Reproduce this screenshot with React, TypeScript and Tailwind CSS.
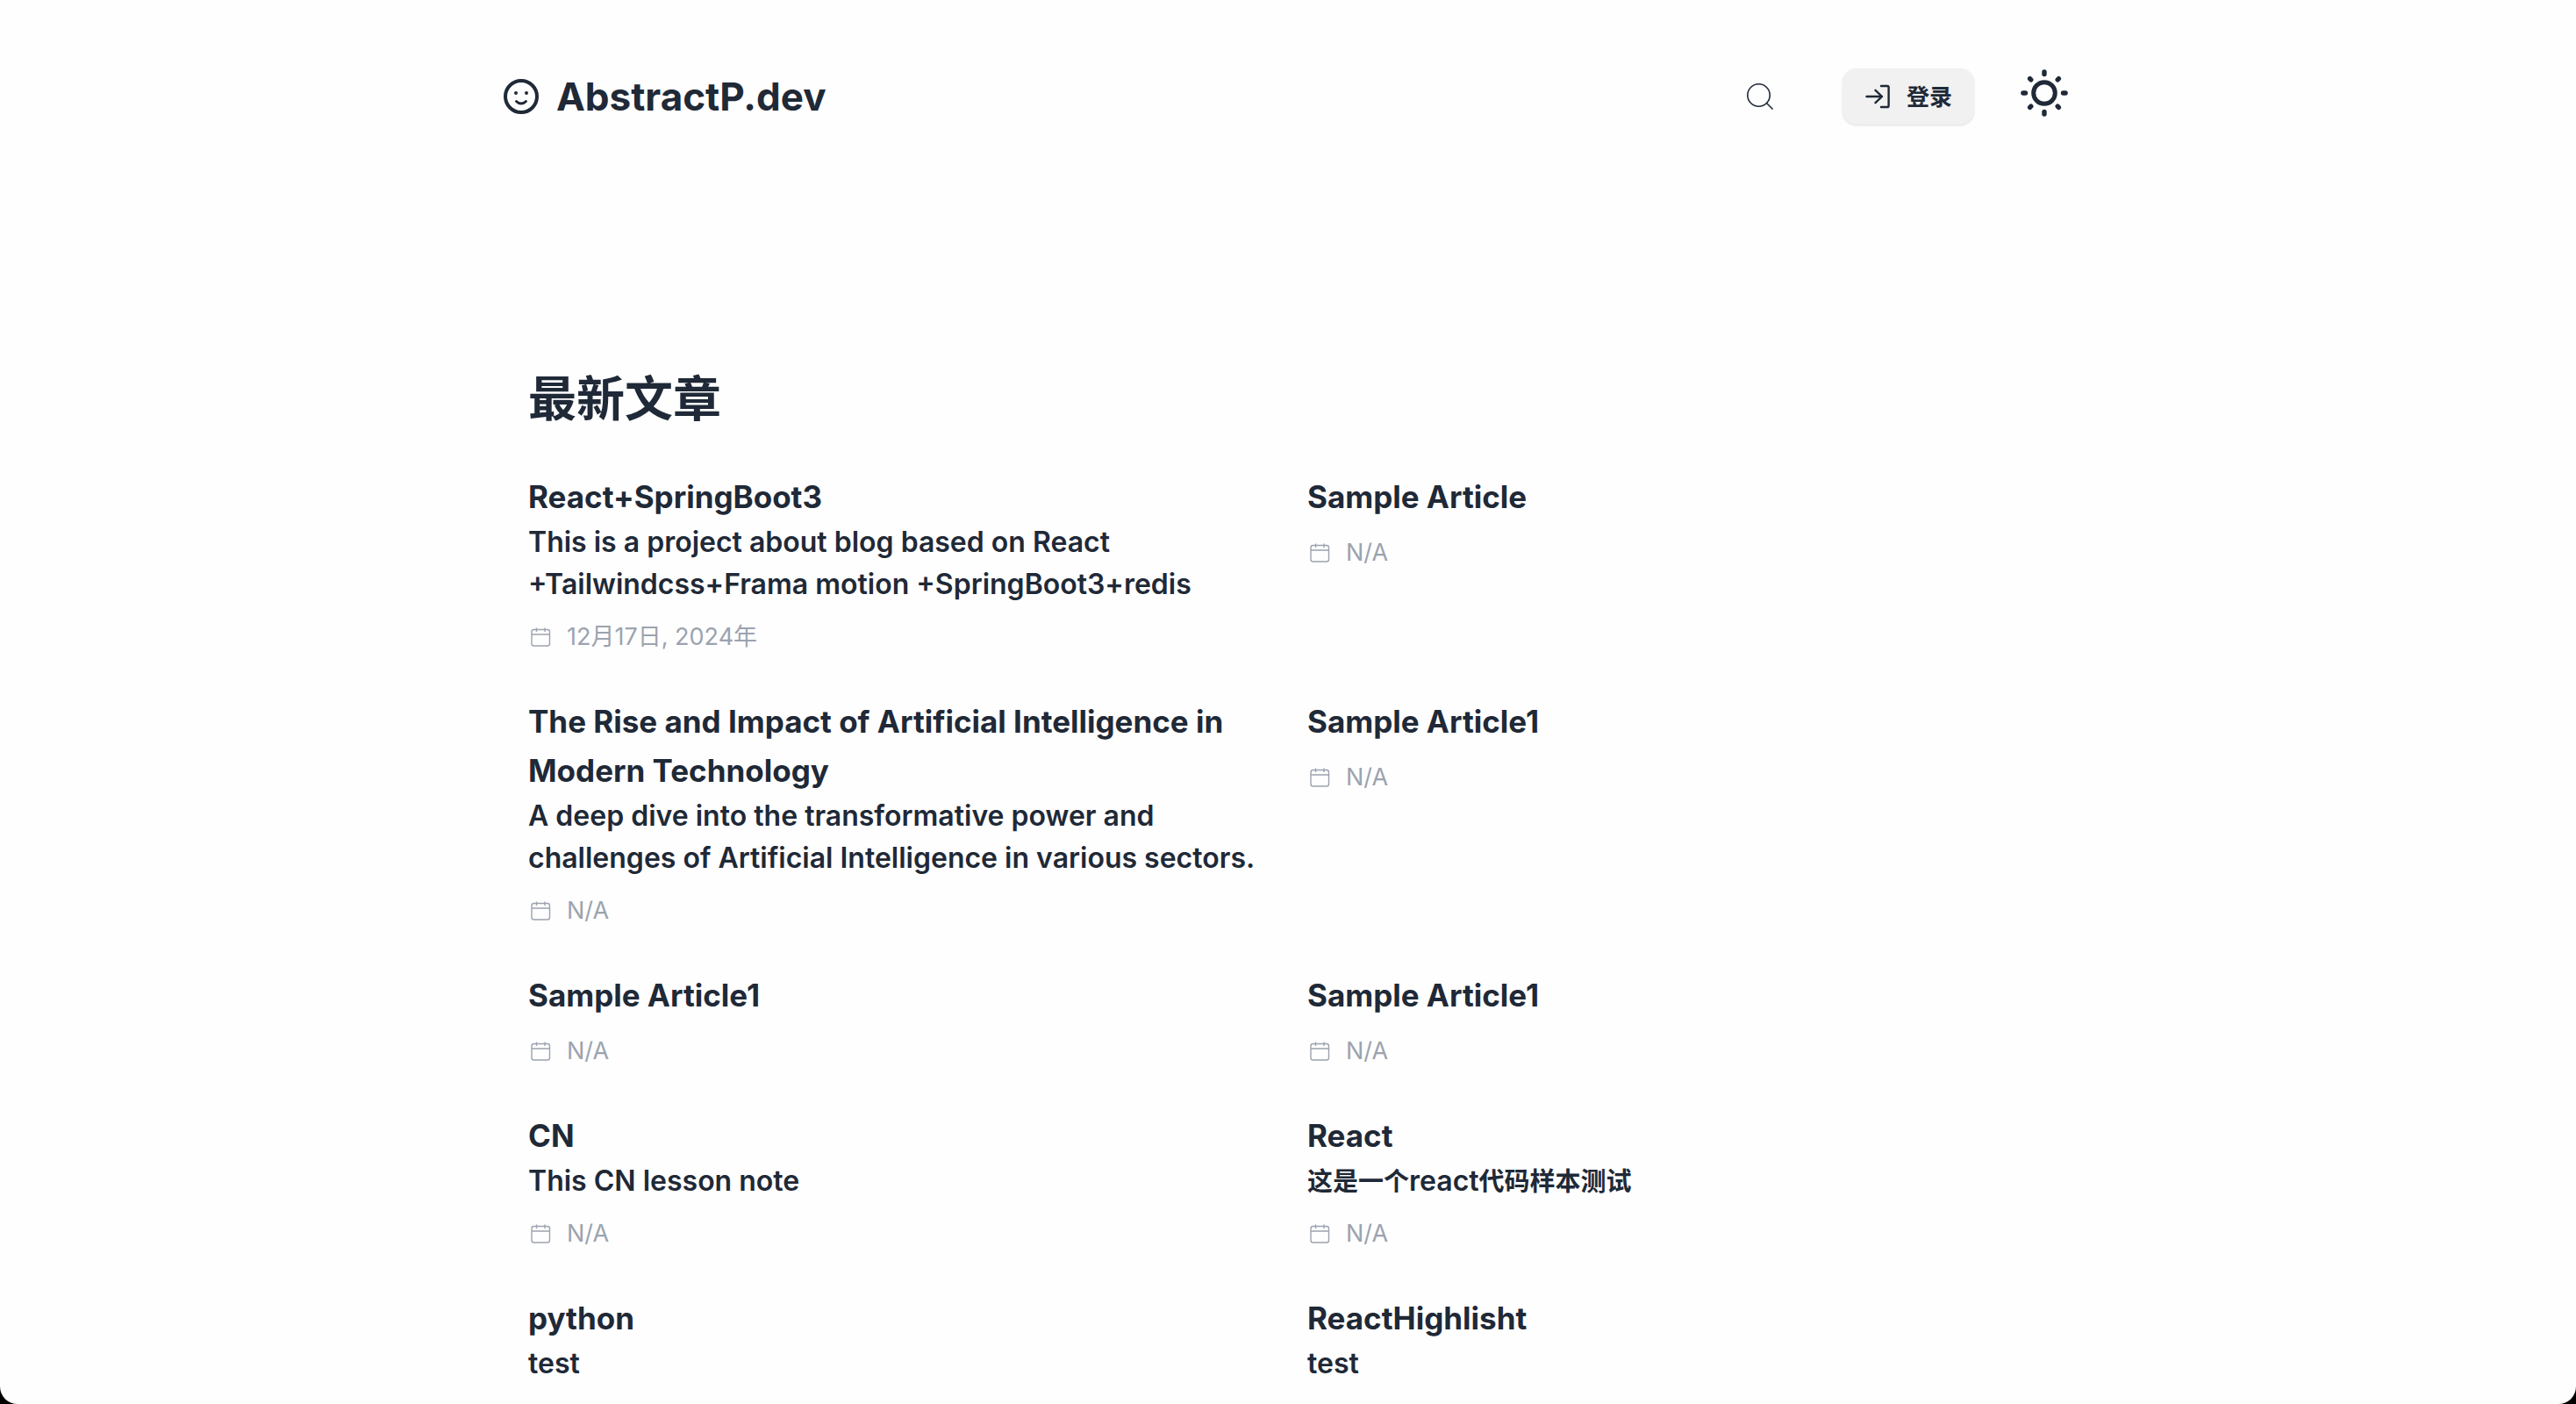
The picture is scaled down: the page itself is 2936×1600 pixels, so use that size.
import React from "react";

type Article = { title: string; summary?: React.ReactNode; date?: string };

const articles: Article[] = [
  {
    title: "React+SpringBoot3",
    summary:
      "This is a project about blog based on React +Tailwindcss+Frama motion +SpringBoot3+redis",
    date: "12月17日, 2024年",
  },
  { title: "Sample Article", date: "N/A" },
  {
    title: "The Rise and Impact of Artificial Intelligence in Modern Technology",
    summary:
      "A deep dive into the transformative power and challenges of Artificial Intelligence in various sectors.",
    date: "N/A",
  },
  { title: "Sample Article1", date: "N/A" },
  { title: "Sample Article1", date: "N/A" },
  { title: "Sample Article1", date: "N/A" },
  { title: "CN", summary: "This CN lesson note", date: "N/A" },
  {
    title: "React",
    summary: (
      <>
        <span lang="zh" className="text-[29px] leading-none">这是一个</span>
        react
        <span lang="zh" className="text-[29px] leading-none">代码样本测试</span>
      </>
    ),
    date: "N/A",
  },
  { title: "python", summary: "test" },
  { title: "ReactHighlisht", summary: "test" },
];

function SmileIcon() {
  return (
    <svg className="size-11" viewBox="0 0 44 44" fill="none" stroke="currentColor" strokeLinecap="round" aria-hidden="true">
      <circle cx="22" cy="22" r="18" strokeWidth="4" />
      <path d="M16.5 27.5c3 3.2 8 3.2 11 0" strokeWidth="3" />
      <circle cx="16" cy="18" r="2" fill="currentColor" stroke="none" />
      <circle cx="28" cy="18" r="2" fill="currentColor" stroke="none" />
    </svg>
  );
}

function SearchIcon() {
  return (
    <svg className="size-10" viewBox="0 0 40 40" fill="none" stroke="currentColor" strokeWidth="1.6" aria-hidden="true">
      <circle cx="18.5" cy="18.5" r="12.7" />
      <path d="M27.5 27.5l7 7" />
    </svg>
  );
}

function LoginIcon() {
  return (
    <svg className="size-8" viewBox="0 0 32 32" fill="none" stroke="currentColor" strokeWidth="2.4" strokeLinecap="round" strokeLinejoin="round" aria-hidden="true">
      <path d="M19 4h7a1.6 1.6 0 0 1 1.6 1.6v20.8a1.6 1.6 0 0 1-1.6 1.6h-7" />
      <path d="M2.5 16h17.5M12.5 8.8l7.500 7.200l-7.500 7.200" />
    </svg>
  );
}

function SunIcon() {
  return (
    <svg className="size-14" viewBox="0 0 56 56" fill="none" stroke="currentColor" strokeLinecap="round" aria-hidden="true">
      <circle cx="28" cy="28" r="12.3" strokeWidth="5" />
      <path
        strokeWidth="5.4"
        d="M28 3.9v2.6M28 49.5v2.6M3.9 28h2.6M49.5 28h2.6M11.6 11.6l1.2 1.2M43.2 43.2l1.2 1.2M11.6 44.4l1.2-1.2M43.2 12.8l1.2-1.2"
      />
    </svg>
  );
}

function CalendarIcon() {
  return (
    <svg className="size-7" viewBox="0 0 28 28" fill="none" stroke="currentColor" strokeWidth="1.4" aria-hidden="true">
      <rect x="4" y="5.5" width="20.5" height="18.5" rx="2.5" />
      <path d="M4 11h20.5M9.5 3.5v4.5M19 3.5v4.5" />
    </svg>
  );
}

function Header() {
  return (
    <header className="flex h-[220px] items-start justify-between pt-[78px] pr-1.5">
      <a href="#home" className="flex h-16 items-center gap-[18px]">
        <SmileIcon />
        <span className="text-[44px] leading-[64px] font-bold">AbstractP.dev</span>
      </a>
      <div className="flex h-16 items-center">
        <button type="button" aria-label="搜索" className="mr-[74px]">
          <SearchIcon />
        </button>
        <button
          type="button"
          className="mr-[52px] flex h-16 items-center gap-4 rounded-2xl bg-[#f1f1f1] px-[25px] text-[26px] font-semibold shadow-sm"
        >
          <LoginIcon />
          登录
        </button>
        <button type="button" aria-label="切换主题" className="pb-2">
          <SunIcon />
        </button>
      </div>
    </header>
  );
}

function ArticleCard({ title, summary, date }: Article) {
  return (
    <article>
      <h2 className="text-[35px] leading-[56px] font-bold">
        <a href="#article">{title}</a>
      </h2>
      {summary && <p className="text-[32px] leading-[48px] font-semibold">{summary}</p>}
      {date && (
        <p className="mt-4 flex h-10 items-center gap-4 text-[27px] leading-10 text-[#9ca3af]">
          <CalendarIcon />
          <span>{date}</span>
        </p>
      )}
    </article>
  );
}

export default function App() {
  return (
    <div className="h-screen overflow-hidden bg-black">
      <div className="h-full overflow-hidden rounded-b-[20px] bg-[#fefefe] font-['Inter','Noto_Sans_CJK_SC',sans-serif] text-[#1f2937]">
        <div className="mx-auto max-w-[1792px]">
          <Header />
          <main className="px-[30px] pt-[194px]">
            <h1 className="text-[55px] leading-[80px] font-bold">最新文章</h1>
            <section className="mt-11 grid grid-cols-2 gap-x-11 gap-y-12">
              {articles.map((article, index) => (
                <ArticleCard key={index} {...article} />
              ))}
            </section>
          </main>
        </div>
      </div>
    </div>
  );
}
